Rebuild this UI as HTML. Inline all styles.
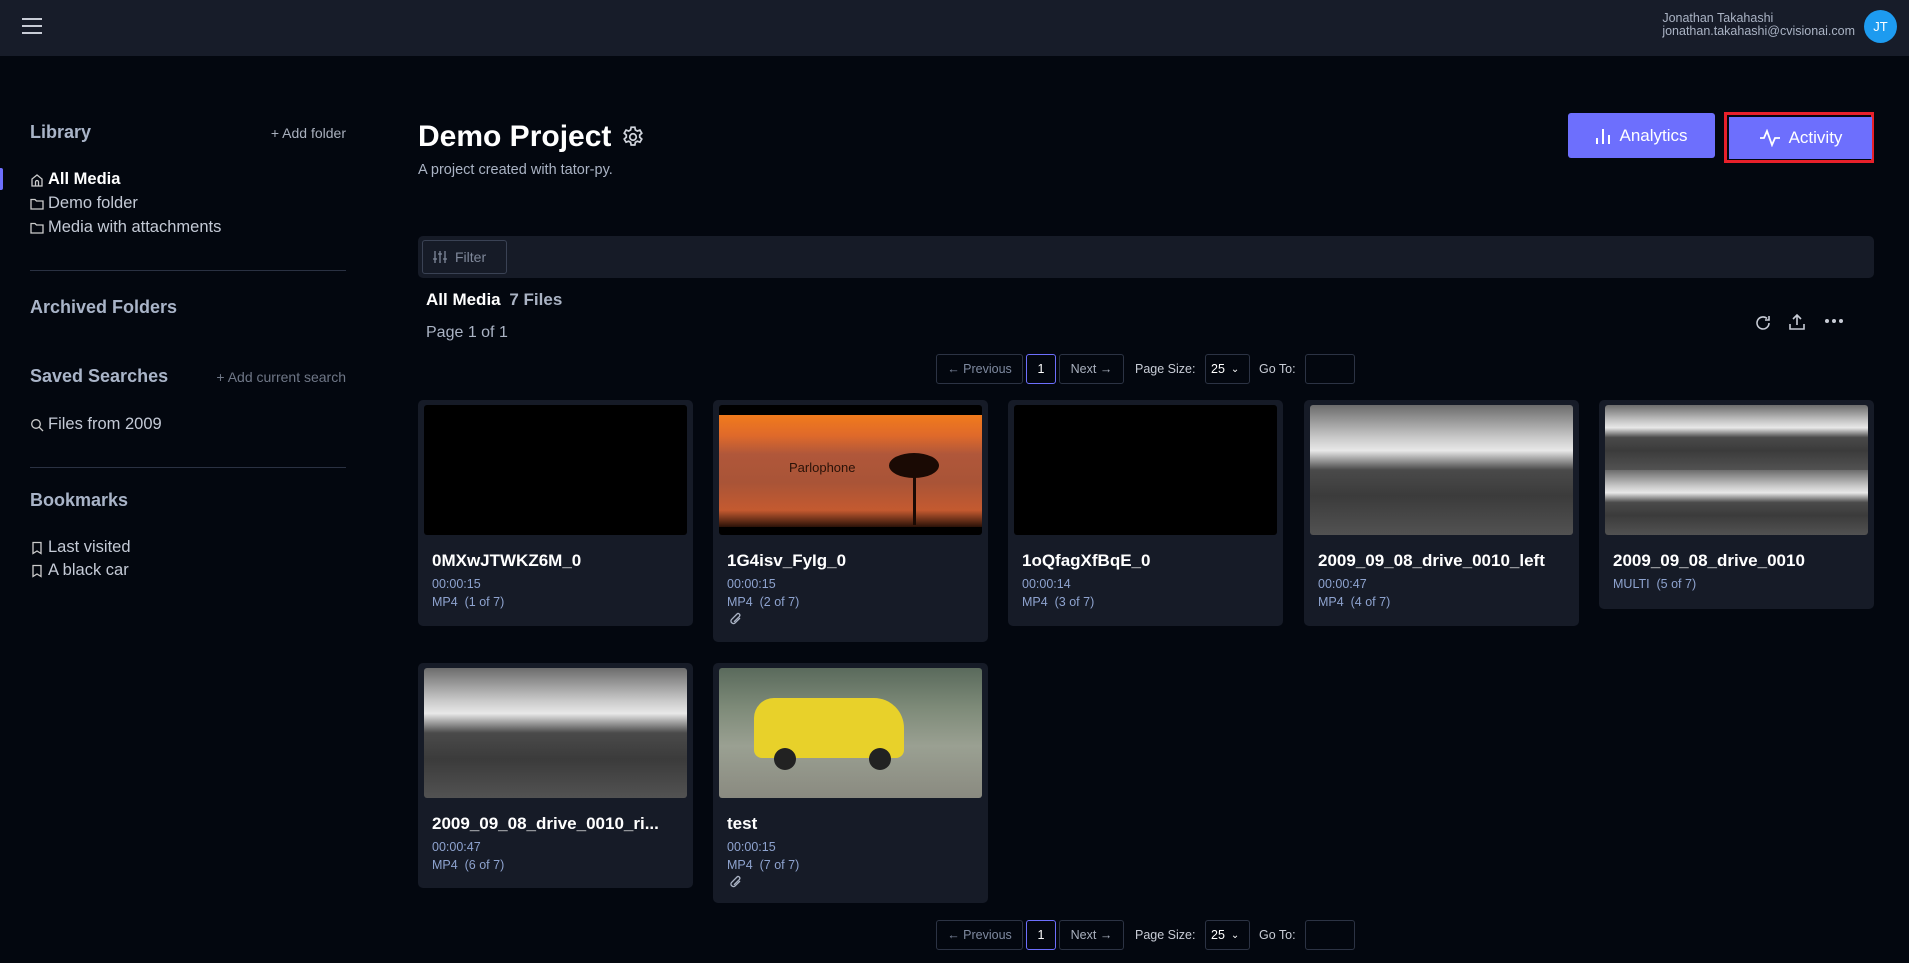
<!DOCTYPE html>
<html><head><meta charset="utf-8"><style>
*{margin:0;padding:0;box-sizing:border-box}
body{width:1909px;height:963px;background:#03070f;font-family:"Liberation Sans",sans-serif;color:#fff;position:relative;overflow:hidden}
.a{position:absolute;white-space:nowrap}
.top{position:absolute;left:0;top:0;width:1909px;height:56px;background:#171c29}
.side{color:#a9b4c8;font-size:18px;font-weight:bold}
.item{font-size:16.5px;color:#c4cad6;display:flex;align-items:center;gap:4px}
.hr{position:absolute;height:1px;background:#2a3142;left:30px;width:316px}
.small{font-size:14px;color:#a9b0be}
.btn{position:absolute;background:#6d6ffd;border-radius:3px;color:#fff;font-size:17px;display:flex;align-items:center;justify-content:center;gap:8px}
.card{position:absolute;width:275px;background:#161b27;border-radius:5px}
.th{position:absolute;left:6px;top:5px;width:263px;height:130px;border-radius:3px;overflow:hidden;background:#000}
.ct{position:absolute;left:14px;top:151px;font-size:17px;font-weight:bold;color:#fff}
.cm{position:absolute;left:14px;font-size:12.5px;color:#8ea3cf}
.pg{position:absolute;border:1px solid #2c3344;border-radius:3px;font-size:12.5px;color:#7f8aa0;display:flex;align-items:center;justify-content:center}
.street{background:linear-gradient(180deg,#6c6c6c 0%,#c9c9c9 25%,#e8e8e8 35%,#4a4a4a 50%,#3b3b3b 70%,#525252 100%)}
</style></head><body>
<div class="top"></div>
<svg class="a" style="left:21px;top:17px" width="22" height="18" viewBox="0 0 22 18"><path d="M1 2h20M1 9h20M1 16h20" stroke="#c8ccd6" stroke-width="2"/></svg>
<div class="a" style="right:54px;top:12px;font-size:12.5px;color:#aab3c4;line-height:13px">Jonathan Takahashi<br>jonathan.takahashi@cvisionai.com</div>
<div class="a" style="left:1864px;top:10px;width:33px;height:33px;border-radius:50%;background:#1d9bf0;font-size:13px;display:flex;align-items:center;justify-content:center">JT</div>

<div class="a" style="left:0;top:168px;width:3px;height:22px;background:#6d6ffd;border-radius:0 2px 2px 0"></div>
<div class="a side" style="left:30px;top:122px">Library</div>
<div class="a small" style="right:1563px;top:125px">+ Add folder</div>
<div class="a item" style="left:30px;top:170px;color:#fff;font-weight:bold"><svg width="14" height="14" viewBox="0 0 14 14"><path d="M2 13V6l5-4 5 4v7H2zM5.5 13V9a1.5 1.5 0 0 1 3 0v4" fill="none" stroke="#ccc" stroke-width="1.3"/></svg>All Media</div>
<div class="a item" style="left:30px;top:194px"><svg width="14" height="14" viewBox="0 0 14 14"><path d="M1 2.5h4l1.5 1.5H13v8H1z" fill="none" stroke="#ccc" stroke-width="1.3"/></svg>Demo folder</div>
<div class="a item" style="left:30px;top:218px"><svg width="14" height="14" viewBox="0 0 14 14"><path d="M1 2.5h4l1.5 1.5H13v8H1z" fill="none" stroke="#ccc" stroke-width="1.3"/></svg>Media with attachments</div>
<div class="hr" style="top:270px"></div>
<div class="a side" style="left:30px;top:297px">Archived Folders</div>
<div class="a side" style="left:30px;top:366px">Saved Searches</div>
<div class="a small" style="right:1563px;top:369px;color:#6f7787">+ Add current search</div>
<div class="a item" style="left:30px;top:415px"><svg width="14" height="14" viewBox="0 0 14 14"><circle cx="6" cy="6" r="4.3" fill="none" stroke="#ccc" stroke-width="1.3"/><path d="M9.2 9.2L13 13" stroke="#ccc" stroke-width="1.3"/></svg>Files from 2009</div>
<div class="hr" style="top:467px"></div>
<div class="a side" style="left:30px;top:490px">Bookmarks</div>
<div class="a item" style="left:30px;top:538px"><svg width="14" height="14" viewBox="0 0 14 14"><path d="M3 1.5h8v11L7 10l-4 2.5z" fill="none" stroke="#ccc" stroke-width="1.3"/></svg>Last visited</div>
<div class="a item" style="left:30px;top:561px"><svg width="14" height="14" viewBox="0 0 14 14"><path d="M3 1.5h8v11L7 10l-4 2.5z" fill="none" stroke="#ccc" stroke-width="1.3"/></svg>A black car</div>

<div class="a" style="left:418px;top:120px;font-size:30px;font-weight:bold">Demo Project</div>
<svg class="a" style="left:620px;top:124px" width="26" height="26" viewBox="0 0 24 24" fill="none" stroke="#d0d4dc" stroke-width="1.6"><circle cx="12" cy="12" r="3"/><path d="M10.3 3h3.4l.5 2.5 1.8 1 2.4-.9 1.7 2.9-1.9 1.7v2l1.9 1.7-1.7 2.9-2.4-.9-1.8 1-.5 2.5h-3.4l-.5-2.5-1.8-1-2.4.9-1.7-2.9 1.9-1.7v-2L3.9 8.5l1.7-2.9 2.4.9 1.8-1z"/></svg>
<div class="a" style="left:418px;top:162px;font-size:14.5px;color:#aab3c4">A project created with tator-py.</div>

<div class="btn" style="left:1568px;top:113px;width:147px;height:45px"><svg width="16" height="18" viewBox="0 0 16 18"><path d="M2 17v-6M8 17V2M14 17V8" stroke="#fff" stroke-width="2"/></svg>Analytics</div>
<div class="a" style="left:1724px;top:112px;width:150px;height:51px;border:3px solid #e8202a"></div>
<div class="btn" style="left:1729px;top:117px;width:143px;height:42px;border-radius:0"><svg width="22" height="18" viewBox="0 0 22 18"><path d="M1 9h4l3-7 5 14 3-7h5" fill="none" stroke="#fff" stroke-width="1.8"/></svg>Activity</div>

<div class="a" style="left:418px;top:236px;width:1456px;height:42px;background:#161b27;border-radius:5px"></div>
<div class="a" style="left:422px;top:240px;width:85px;height:34px;border:1px solid #3a4254;border-radius:3px;color:#7f889a;font-size:14px;display:flex;align-items:center;padding-left:10px;gap:8px"><svg width="14" height="14" viewBox="0 0 14 14" stroke="#7f889a" stroke-width="1.3"><path d="M2 1v12M7 1v12M12 1v12M0 9h4M5 4h4M10 9h4"/></svg>Filter</div>

<div class="a" style="left:426px;top:290px;font-size:17px;font-weight:bold">All Media <span style="color:#aab3c4;margin-left:4px">7 Files</span></div>
<div class="a" style="left:426px;top:324px;font-size:16px;color:#aab3c4">Page 1 of 1</div>
<svg class="a" style="left:1754px;top:314px" width="18" height="18" viewBox="0 0 18 18" fill="none" stroke="#c8ccd6" stroke-width="1.6"><path d="M15 9a6 6 0 1 1-2-4.5M15 2v4h-4"/></svg>
<svg class="a" style="left:1788px;top:313px" width="18" height="18" viewBox="0 0 18 18" fill="none" stroke="#c8ccd6" stroke-width="1.6"><path d="M9 12V2M5 6l4-4 4 4M2 11v5h14v-5"/></svg>
<svg class="a" style="left:1824px;top:318px" width="20" height="6" viewBox="0 0 20 6" fill="#c8ccd6"><circle cx="3" cy="3" r="2"/><circle cx="10" cy="3" r="2"/><circle cx="17" cy="3" r="2"/></svg>

<div class="pg" style="left:936px;top:354px;width:87px;height:30px">← Previous</div>
<div class="pg" style="left:1026px;top:354px;width:30px;height:30px;border-color:#6d6ffd;color:#fff">1</div>
<div class="pg" style="left:1059px;top:354px;width:65px;height:30px;color:#a9b0be">Next →</div>
<div class="a" style="left:1135px;top:362px;font-size:12.5px;color:#c8ccd6">Page Size:</div>
<div class="pg" style="left:1205px;top:354px;width:45px;height:30px;color:#fff;justify-content:flex-start;padding-left:5px">25 <span style="margin-left:6px;font-size:10px">⌄</span></div>
<div class="a" style="left:1259px;top:362px;font-size:12.5px;color:#c8ccd6">Go To:</div>
<div class="pg" style="left:1305px;top:354px;width:50px;height:30px"></div>

<div class="card" style="left:418px;top:400px;height:226px"><div class="th"></div><div class="ct">0MXwJTWKZ6M_0</div><div class="cm" style="top:177px">00:00:15</div><div class="cm" style="top:195px">MP4 &nbsp;(1 of 7)</div></div>
<div class="card" style="left:713px;top:400px;height:242px"><div class="th"><div style="position:absolute;left:0;top:10px;width:263px;height:112px;background:linear-gradient(180deg,#f07a1c 0%,#e06a2a 18%,#b0573a 35%,#a95437 60%,#c45a30 85%,#2a1208 100%)"></div><div style="position:absolute;left:70px;top:55px;color:#2a1208;font-size:13px">Parlophone</div><div style="position:absolute;left:170px;top:48px;width:50px;height:25px;border-radius:50%;background:#1a0a04"></div><div style="position:absolute;left:194px;top:65px;width:3px;height:55px;background:#1a0a04"></div></div><div class="ct">1G4isv_FyIg_0</div><div class="cm" style="top:177px">00:00:15</div><div class="cm" style="top:195px">MP4 &nbsp;(2 of 7)</div><svg class="a" style="left:16px;top:212px" width="14" height="14" viewBox="0 0 14 14"><path d="M11 6l-5 5a2.5 2.5 0 0 1-3.5-3.5L8 2a1.7 1.7 0 0 1 2.4 2.4L5 9.8" fill="none" stroke="#aab3c4" stroke-width="1.3"/></svg></div>
<div class="card" style="left:1008px;top:400px;height:226px"><div class="th"></div><div class="ct">1oQfagXfBqE_0</div><div class="cm" style="top:177px">00:00:14</div><div class="cm" style="top:195px">MP4 &nbsp;(3 of 7)</div></div>
<div class="card" style="left:1304px;top:400px;height:226px"><div class="th street"></div><div class="ct">2009_09_08_drive_0010_left</div><div class="cm" style="top:177px">00:00:47</div><div class="cm" style="top:195px">MP4 &nbsp;(4 of 7)</div></div>
<div class="card" style="left:1599px;top:400px;height:209px"><div class="th"><div class="street" style="height:65px"></div><div class="street" style="height:65px"></div></div><div class="ct">2009_09_08_drive_0010</div><div class="cm" style="top:177px">MULTI &nbsp;(5 of 7)</div></div>
<div class="card" style="left:418px;top:663px;height:225px"><div class="th street"></div><div class="ct">2009_09_08_drive_0010_ri...</div><div class="cm" style="top:177px">00:00:47</div><div class="cm" style="top:195px">MP4 &nbsp;(6 of 7)</div></div>
<div class="card" style="left:713px;top:663px;height:240px"><div class="th" style="background:linear-gradient(180deg,#5a6a5c 0%,#7d8a78 30%,#9aa092 60%,#8a8a80 100%)"><div style="position:absolute;left:35px;top:30px;width:150px;height:60px;background:#e8d12a;border-radius:20px 30px 8px 8px"></div><div style="position:absolute;left:55px;top:80px;width:22px;height:22px;border-radius:50%;background:#222"></div><div style="position:absolute;left:150px;top:80px;width:22px;height:22px;border-radius:50%;background:#222"></div></div><div class="ct">test</div><div class="cm" style="top:177px">00:00:15</div><div class="cm" style="top:195px">MP4 &nbsp;(7 of 7)</div><svg class="a" style="left:16px;top:212px" width="14" height="14" viewBox="0 0 14 14"><path d="M11 6l-5 5a2.5 2.5 0 0 1-3.5-3.5L8 2a1.7 1.7 0 0 1 2.4 2.4L5 9.8" fill="none" stroke="#aab3c4" stroke-width="1.3"/></svg></div>

<div class="pg" style="left:936px;top:920px;width:87px;height:30px">← Previous</div>
<div class="pg" style="left:1026px;top:920px;width:30px;height:30px;border-color:#6d6ffd;color:#fff">1</div>
<div class="pg" style="left:1059px;top:920px;width:65px;height:30px;color:#a9b0be">Next →</div>
<div class="a" style="left:1135px;top:928px;font-size:12.5px;color:#c8ccd6">Page Size:</div>
<div class="pg" style="left:1205px;top:920px;width:45px;height:30px;color:#fff;justify-content:flex-start;padding-left:5px">25 <span style="margin-left:6px;font-size:10px">⌄</span></div>
<div class="a" style="left:1259px;top:928px;font-size:12.5px;color:#c8ccd6">Go To:</div>
<div class="pg" style="left:1305px;top:920px;width:50px;height:30px"></div>
</body></html>
